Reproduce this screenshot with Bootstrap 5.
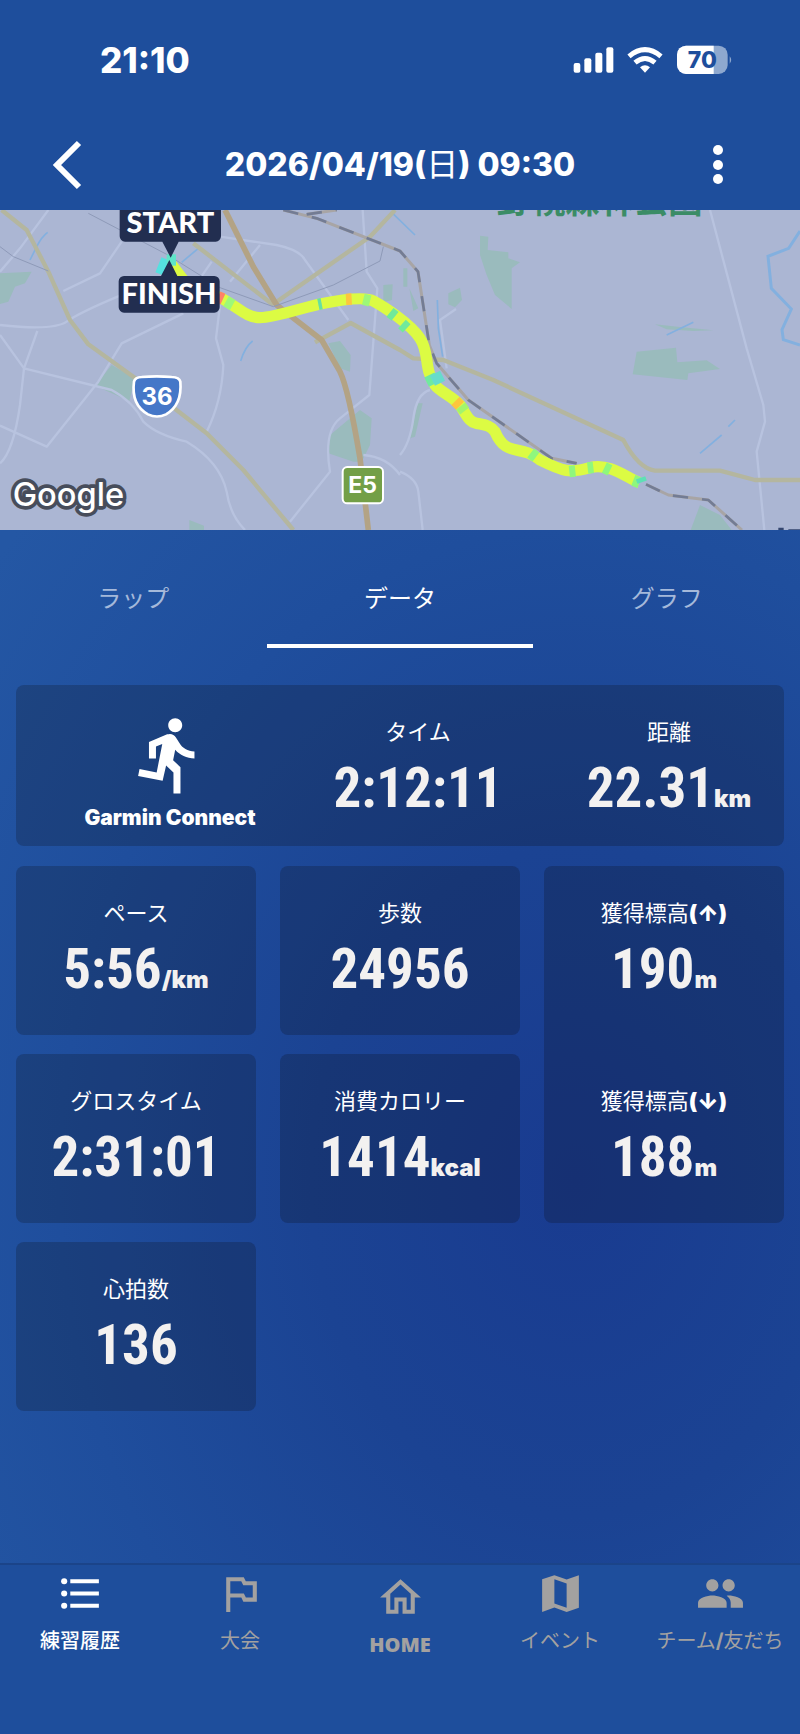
<!DOCTYPE html>
<html lang="ja">
<head>
<meta charset="utf-8">
<meta name="viewport" content="width=device-width, initial-scale=1">
<title>練習履歴</title>
<link href="https://cdn.jsdelivr.net/npm/bootstrap@5.3.0/dist/css/bootstrap.min.css" rel="stylesheet">
<style>
  body { background: #1e4e9c; color: #fff; font-family: Inter, "Noto Sans CJK JP", sans-serif; line-height: 1.2; }
  .status-bar { height: 120px; padding: 0 67px 0 100px; }
  .clock { font-size: 35px; font-weight: 800; }
  .title-bar { height: 90px; padding: 0 48px; }
  .title-bar h1 { font-size: 32px; font-weight: 800; }
  .title-bar h1 span { font-weight: 400; }
  .icon-btn { border: 0; background: none; padding: 0; color: inherit; line-height: 0; }
  .route-map { display: block; width: 100%; height: 320px; background: #abb6d3; }
  .data-area { background: radial-gradient(ellipse 760px 960px at 72% 63%, #193b90 0%, #1b4393 35%, #1f4e9d 68%, #2457a4 100%); }
  .tab-link { height: 118px; padding-top: 24px; font-size: 24px; color: #a5b9da; text-decoration: none; border-bottom: 4px solid transparent; }
  .tab-link.active { color: #fff; border-color: #fff; }
  .panel { background: rgba(12, 6, 0, .2); border-radius: 8px; }
  .summary { display: grid; grid-template-columns: 216fr 280fr 222fr; height: 161px; margin-bottom: 20px; padding: 0 4px 0 46px; }
  .metrics { display: grid; grid-template-columns: repeat(3, 1fr); grid-auto-rows: 169px; gap: 19px 24px; }
  .tall { grid-row: span 2; display: grid; grid-template-rows: 1fr 1fr; gap: 19px; }
  .stat { padding-top: 32px; text-align: center; }
  .stat dt { font-size: 22px; line-height: 30px; font-weight: 400; }
  .stat dt b { font-weight: 900; }
  .stat dd { margin: 8px 0 0; color: #f3f1f0; line-height: 66px; white-space: nowrap; }
  .num { font: 700 55px/66px "Roboto Condensed", "Liberation Sans Narrow", Roboto, sans-serif; }
  .unit { font-size: 24px; font-weight: 900; }
  .source { font-size: 21px; font-weight: 900; padding-top: 28px; }
  .bottom-nav { height: 171px; border-top: 2px solid #1b4489; }
  .bottom-nav a { color: #a3a1a0; font-size: 20px; line-height: 28px; text-decoration: none; padding-top: 4px; white-space: nowrap; }
  .bottom-nav svg { width: 49px; height: 49px; margin-bottom: 9px; fill: currentColor; }
  .bottom-nav .active { color: #fff; font-weight: 500; }
  .bottom-nav .home-link { font: 900 20px/28px "Noto Sans", sans-serif; padding-top: 8px; }
</style>
</head>
<body class="d-flex flex-column min-vh-100">
<header>
  <div class="status-bar d-flex align-items-center justify-content-between">
    <time class="clock">21:10</time>
    <svg width="160" height="34" viewBox="40 37 480 102" fill="#fff" role="img" aria-label="電波 Wi-Fi 電池">
      <rect x="42" y="97" width="20" height="29" rx="6"/><rect x="74" y="83" width="21" height="43" rx="6"/><rect x="107" y="66" width="21" height="60" rx="6"/><rect x="140" y="50" width="21" height="76" rx="6"/>
      <g fill="none" stroke="#fff" stroke-width="15"><path d="M208 77Q256 37 304 77"/><path d="M226 96Q256 71 286 96"/></g>
      <path d="M241 110Q256 97 271 110L256 126Z"/>
      <rect x="352" y="45" width="152" height="85" rx="27" fill="#8ea8cf"/><path d="M462 45H379a27 27 0 0 0-27 27v31a27 27 0 0 0 27 27h83z"/>
      <path d="M510 77q9 11 0 22z" fill="#8ea8cf"/>
      <text x="428" y="112" text-anchor="middle" font-size="69" font-weight="800" fill="#1e4e9c">70</text>
    </svg>
  </div>
  <div class="title-bar d-flex align-items-center justify-content-between">
    <button class="icon-btn" type="button" aria-label="戻る"><svg width="40" height="50" viewBox="0 0 40 50" fill="none" stroke="#fff" stroke-width="6"><path d="M31 3 9 25 31 47"/></svg></button>
    <h1 class="m-0">2026/04/19(<span>日</span>) 09:30</h1>
    <button class="icon-btn" type="button" aria-label="メニュー"><svg width="40" height="50" viewBox="0 0 40 50" fill="#fff"><circle cx="6" cy="10" r="5"/><circle cx="6" cy="25" r="5"/><circle cx="6" cy="39" r="5"/></svg></button>
  </div>
</header>

<svg class="route-map" viewBox="0 15 2400 960" preserveAspectRatio="xMidYMid slice" role="img" aria-label="コース地図">
  <!-- parks -->
  <g fill="#9abbbd">
    <path d="M0 205 95 200 75 235 45 245 25 290 0 297zM335 480 405 520 388 588 285 542zM985 415 1020 408 1052 450 1050 500 1020 490zM1080 615 1115 640 1110 720 1085 770 1060 770 985 745 990 690zM568 945 612 962 612 975 568 975zM1150 240 1178 238 1176 285 1150 292z"/>
    <path d="M1440 92 1465 95 1463 135 1525 142 1525 160 1560 172 1535 190 1535 312 1485 270 1460 210 1440 150zM1345 265 1380 248 1386 285 1365 307 1345 298zM1910 440 2028 428 2032 472 2120 466 2160 492 2065 505 2062 525 1898 508zM1965 358 2040 366 2140 376 2080 378 2000 373zM2100 900 2160 930 2195 975 2072 975zM1210 190 1222 190 1222 245 1210 245zM1228 250 1255 310 1240 318zM1253 595 1268 595 1245 695 1230 700z"/>
  </g>
  <!-- minor roads -->
  <g fill="none" stroke="#b8c3df" stroke-width="7" stroke-linejoin="round">
    <path d="M145 15 60 130 0 200M365 110 300 205 190 258M0 360Q160 378 200 350T360 272M550 325 365 415 295 530 140 725 0 662M0 390 72 490 60 600Q40 740 0 775M112 378 72 490 335 555Q400 590 430 650 470 690 560 710 660 770 680 860 690 930 735 975"/>
    <path d="M660 95 830 120Q900 135 915 165L1045 345M660 300 648 400 670 480Q665 590 620 680M780 120 690 230M635 170 590 235M1088 15 1100 200 1132 250 1108 570 1020 640Q970 680 990 800L870 950M1090 750Q1160 755 1200 810M1368 312 1320 345 1340 490M1290 555Q1250 565 1240 640T1200 750M1200 800Q1250 820 1255 860L1268 975M2130 15 2240 430 2290 600 2295 650 2270 740 2293 975"/>
  </g>
  <g fill="none" stroke="#83b0df" stroke-width="5">
    <path d="M143 82Q125 95 110 125L90 165M595 130 545 172M758 408Q735 425 722 468M1178 25 1245 90M1312 285 1315 370 1328 455M2000 390 2080 352M2100 745 2165 690M2185 665 2205 645"/>
    <path d="M2400 78 2366 130 2304 154 2314 250 2374 312 2346 374 2350 404 2400 420" stroke-width="9"/>
  </g>
  <!-- main roads -->
  <g fill="none" stroke="#b4b69f" stroke-width="13" stroke-linejoin="round">
    <path d="M5 15 80 75 145 200 210 345 265 418 400 515 620 685 730 795 880 975M580 115 820 300M830 290 1110 95 1185 15M945 412 1052 354 1200 435 1240 460 1330 465 1480 525 1870 705Q1915 790 1965 797L2160 797 2265 825 2400 825"/>
    <path d="M675 15 760 185 830 300 965 405 1020 500Q1045 550 1080 760L1105 975" stroke="#b3a385" stroke-width="17"/>
  </g>
  <!-- railway -->
  <g fill="none" stroke-linejoin="round">
    <path d="M850 15 950 40 1200 138 1254 200 1288 420 1310 475 1405 585 1655 760 1730 775M1938 838 2005 870 2125 885 2226 975M920 28 1010 15" stroke="#a8a5a5" stroke-width="9"/>
    <path d="M850 15 950 40 1200 138 1254 200 1288 420 1310 475 1405 585 1655 760 1730 775M1938 838 2005 870 2125 885 2226 975M920 28 1010 15" stroke="#737c94" stroke-width="8" stroke-dasharray="46 42"/>
    <path d="M265 25 500 148 660 248 820 305 1000 240 1140 168 1150 125M0 125 40 155 145 198" stroke="#8e9ab8" stroke-width="3"/>
  </g>
  <!-- route coloured by pace -->
  <g fill="none" stroke-width="34">
    <path d="M512 175 550 225 610 258 665 280C715 308 740 338 780 338S920 305 960 297 1090 272 1120 288 1230 355 1260 400 1270 490 1305 540C1320 560 1355 573 1380 600 1400 630 1405 650 1430 655S1470 660 1485 680C1520 760 1560 715 1620 765 1690 800 1710 805 1770 788S1890 825 1917 832" stroke="#dcfb43"/>
    <path d="M482 208 500 163" stroke="#55e1e0"/><path d="M500 165 528 165" stroke="#5fe5c8"/>
    <path d="M654 275 669 282" stroke="#ff8268"/><path d="M678 289 698 300" stroke="#9df878"/>
    <path d="M955 298 965 296" stroke="#67dfa3"/><path d="M1038 283 1055 282" stroke="#fdc63e"/><path d="M1090 283 1110 288" stroke="#9df878"/>
    <path d="M1170 322 1185 334M1206 357 1220 370" stroke="#70e99b"/>
    <path d="M1288 510 1302 538" stroke="#70e9a0"/><path d="M1305 505 1320 535" stroke="#66dccc"/>
    <path d="M1366 588 1380 602" stroke="#fdc63e"/><path d="M1382 603 1394 618" stroke="#a3f56d"/>
    <path d="M1592 744 1608 756M1708 800 1726 798M1763 789 1780 787M1813 788 1830 796M1900 826 1918 833" stroke="#8ff77d"/>
    <path d="M1910 830 1938 820" stroke="#5ee0b5" stroke-width="14"/>
  </g>
  <text x="1490" y="24" font-size="103" font-weight="700" fill="#3b8c66" style="font-family:'Noto Sans CJK JP',sans-serif">野幌森林公園</text>
  <!-- road shields -->
  <path d="M402 530Q405 517 425 516 470 512 515 516 538 517 541 530 547 600 498 628 471 641 444 628 393 600 402 530Z" fill="#4577c8" stroke="#fff" stroke-width="8"/>
  <text x="471" y="600" font-size="72" font-weight="700" fill="#fff" text-anchor="middle">36</text>
  <rect x="1028" y="786" width="121" height="109" rx="14" fill="#739f47" stroke="#fff" stroke-width="6"/>
  <text x="1088" y="865" font-size="69" font-weight="700" fill="#fff" text-anchor="middle">E5</text>
  <!-- start and finish -->
  <g fill="#222e50">
    <path d="M359 0H663V94a16 16 0 0 1-16 16H536L512 158 487 110H375a16 16 0 0 1-16-16z"/>
    <path d="M372 213H483L508 165 532 213H643a16 16 0 0 1 16 16V307a16 16 0 0 1-16 16H372a16 16 0 0 1-16-16V229a16 16 0 0 1 16-16z"/>
  </g>
  <g fill="#fff" font-size="87" font-weight="900" text-anchor="middle" style="font-family:Lato,sans-serif">
    <text x="511" y="84">START</text><text x="507" y="297">FINISH</text>
  </g>
  <text x="38" y="904" font-size="98" font-weight="500" fill="#fff" stroke="#474d5b" stroke-width="22" stroke-linejoin="round" paint-order="stroke">Google</text>
  <path d="M2335 968h16v7h-16zM2365 973h35v2h-35z" fill="#34466f"/>
</svg>

<main class="data-area flex-grow-1">
  <nav class="row g-0">
    <a class="tab-link col d-flex align-items-center justify-content-center" href="#lap">ラップ</a>
    <a class="tab-link col d-flex align-items-center justify-content-center active" aria-current="page" href="#data">データ</a>
    <a class="tab-link col d-flex align-items-center justify-content-center" href="#graph">グラフ</a>
  </nav>
  <div class="px-3 pb-5" style="padding-top:37px">
    <section class="panel summary">
      <div class="source d-flex flex-column align-items-center">
        <svg width="84" height="84" viewBox="0 0 24 24" fill="#fff" aria-hidden="true"><path d="M13.49 5.48c1.1 0 2-.9 2-2s-.9-2-2-2-2 .9-2 2 .9 2 2 2zm-3.6 13.9 1-4.4 2.1 2v6h2v-7.5l-2.1-2 .6-3c1.3 1.5 3.3 2.5 5.5 2.5v-2c-1.9 0-3.5-1-4.3-2.4l-1-1.6c-.4-.6-1-1-1.7-1-.3 0-.5.1-.8.1l-5.2 2.2v4.7h2v-3.4l1.8-.7-1.6 8.1-4.9-1-.4 2 7 1.4z"/></svg>
        <span class="mt-2 text-nowrap">Garmin Connect</span>
      </div>
      <dl class="stat m-0"><dt>タイム</dt><dd><span class="num">2:12:11</span></dd></dl>
      <dl class="stat m-0"><dt>距離</dt><dd><span class="num">22.31</span><span class="unit">km</span></dd></dl>
    </section>
    <section class="metrics">
      <dl class="panel stat m-0"><dt>ペース</dt><dd><span class="num">5:56</span><span class="unit">/km</span></dd></dl>
      <dl class="panel stat m-0"><dt>歩数</dt><dd><span class="num">24956</span></dd></dl>
      <div class="panel tall">
        <dl class="stat m-0"><dt>獲得標高<b>(↑)</b></dt><dd><span class="num">190</span><span class="unit">m</span></dd></dl>
        <dl class="stat m-0"><dt>獲得標高<b>(↓)</b></dt><dd><span class="num">188</span><span class="unit">m</span></dd></dl>
      </div>
      <dl class="panel stat m-0"><dt>グロスタイム</dt><dd><span class="num">2:31:01</span></dd></dl>
      <dl class="panel stat m-0"><dt>消費カロリー</dt><dd><span class="num">1414</span><span class="unit">kcal</span></dd></dl>
      <dl class="panel stat m-0"><dt>心拍数</dt><dd><span class="num">136</span></dd></dl>
    </section>
  </div>
</main>

<nav class="bottom-nav row g-0">
  <a class="col d-flex flex-column align-items-center active" href="#history"><svg viewBox="0 0 24 24"><circle cx="4" cy="6" r="1.500"/><circle cx="4" cy="12" r="1.500"/><circle cx="4" cy="18" r="1.500"/><path d="M7 19h14v-2H7v2zm0-6h14v-2H7v2zm0-8v2h14V5H7z"/></svg>練習履歴</a>
  <a class="col d-flex flex-column align-items-center" href="#race"><svg viewBox="0 0 24 24"><path d="M12.360 6 13.360 8H18v6h-3.360l-1-2H7V6h5.360M13.600 4H5v17h2v-7h5.400l1 2H20V6h-5.400z"/></svg>大会</a>
  <a class="home-link col d-flex flex-column align-items-center" href="#home"><svg viewBox="0 0 24 24"><path d="m12 5.690 5 4.500V18h-2v-6H9v6H7v-7.810l5-4.500M12 3 2 12h3v8h6v-6h2v6h6v-8h3L12 3z"/></svg>HOME</a>
  <a class="col d-flex flex-column align-items-center" href="#event"><svg viewBox="0 0 24 24"><path fill-rule="evenodd" d="M3 21V5l6-2 6 2.100L21 3v16l-6 2-6-2.100zM15 19l-6-2.110V5l6 2.110z"/></svg>イベント</a>
  <a class="col d-flex flex-column align-items-center" href="#team"><svg viewBox="0 0 24 24"><path d="M16 11c1.660 0 2.990-1.340 2.990-3S17.660 5 16 5s-3 1.340-3 3 1.340 3 3 3zm-8 0c1.660 0 2.990-1.340 2.990-3S9.660 5 8 5 5 6.340 5 8s1.340 3 3 3zm0 2c-2.330 0-7 1.170-7 3.500V19h14v-2.500c0-2.330-4.670-3.500-7-3.500zm8 0c-.29 0-.62.02-.97.05 1.160.84 1.970 1.970 1.970 3.450V19h6v-2.500c0-2.330-4.670-3.500-7-3.500z"/></svg><span>チーム<b>/</b>友だち</span></a>
</nav>
<script src="https://cdn.jsdelivr.net/npm/bootstrap@5.3.0/dist/js/bootstrap.bundle.min.js"></script>
</body>
</html>
